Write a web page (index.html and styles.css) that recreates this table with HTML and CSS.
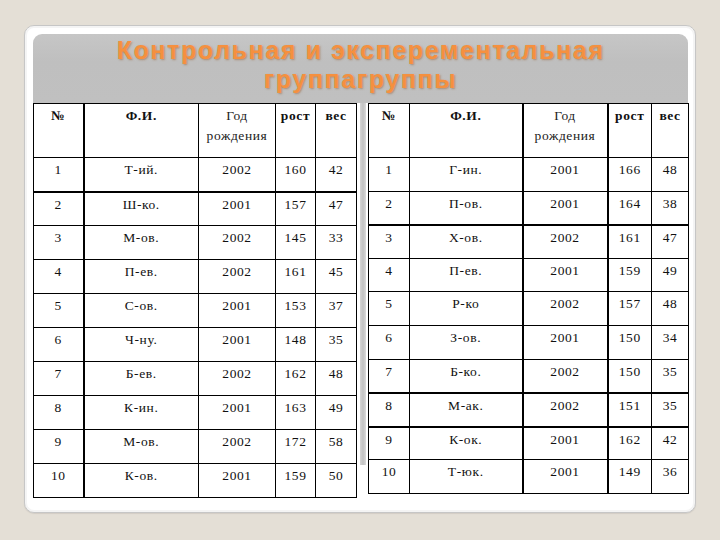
FILE: index.html
```html
<!DOCTYPE html>
<html lang="ru">
<head>
<meta charset="utf-8">
<title>Контрольная и эксперементальная группагруппы</title>
<link rel="stylesheet" href="styles.css">
</head>
<body>
<div class="card">
  <div class="banner">
    <h1 class="title">Контрольная и эксперементальная<br>группагруппы</h1>
  </div>
  <div class="tables">
    <table class="grid grid-left">
      <colgroup><col class="c1"><col class="c2"><col class="c3"><col class="c4"><col class="c5"></colgroup>
      <tr class="head"><th class="thickr">№</th><th>Ф.И.</th><th class="thin">Год<br>рождения</th><th>рост</th><th>вес</th></tr>
      <tr><td class="thickr">1</td><td>Т-ий.</td><td>2002</td><td>160</td><td>42</td></tr>
      <tr class="thickt"><td class="thickr">2</td><td>Ш-ко.</td><td>2001</td><td>157</td><td>47</td></tr>
      <tr><td class="thickr">3</td><td>М-ов.</td><td>2002</td><td>145</td><td>33</td></tr>
      <tr><td class="thickr">4</td><td>П-ев.</td><td>2002</td><td>161</td><td>45</td></tr>
      <tr><td class="thickr">5</td><td>С-ов.</td><td>2001</td><td>153</td><td>37</td></tr>
      <tr><td class="thickr">6</td><td>Ч-ну.</td><td>2001</td><td>148</td><td>35</td></tr>
      <tr><td class="thickr">7</td><td>Б-ев.</td><td>2002</td><td>162</td><td>48</td></tr>
      <tr><td class="thickr">8</td><td>К-ин.</td><td>2001</td><td>163</td><td>49</td></tr>
      <tr><td class="thickr">9</td><td>М-ов.</td><td>2002</td><td>172</td><td>58</td></tr>
      <tr><td class="thickr">10</td><td>К-ов.</td><td>2001</td><td>159</td><td>50</td></tr>
    </table>
    <div class="divider"><div class="divider-bar"></div></div>
    <table class="grid grid-right">
      <colgroup><col class="r1"><col class="r2"><col class="r3"><col class="r4"><col class="r5"></colgroup>
      <tr class="head"><th>№</th><th class="thickr">Ф.И.</th><th class="thickr thin">Год<br>рождения</th><th>рост</th><th>вес</th></tr>
      <tr><td>1</td><td class="thickr">Г-ин.</td><td class="thickr">2001</td><td>166</td><td>48</td></tr>
      <tr><td>2</td><td class="thickr">П-ов.</td><td class="thickr">2001</td><td>164</td><td>38</td></tr>
      <tr class="thickt"><td>3</td><td class="thickr">Х-ов.</td><td class="thickr">2002</td><td>161</td><td>47</td></tr>
      <tr><td>4</td><td class="thickr">П-ев.</td><td class="thickr">2001</td><td>159</td><td>49</td></tr>
      <tr><td>5</td><td class="thickr">Р-ко</td><td class="thickr">2002</td><td>157</td><td>48</td></tr>
      <tr><td>6</td><td class="thickr">З-ов.</td><td class="thickr">2001</td><td>150</td><td>34</td></tr>
      <tr><td>7</td><td class="thickr">Б-ко.</td><td class="thickr">2002</td><td>150</td><td>35</td></tr>
      <tr class="thickt"><td>8</td><td class="thickr">М-ак.</td><td class="thickr">2002</td><td>151</td><td>35</td></tr>
      <tr class="thickt"><td>9</td><td class="thickr">К-ок.</td><td class="thickr">2001</td><td>162</td><td>42</td></tr>
      <tr><td>10</td><td class="thickr">Т-юк.</td><td class="thickr">2001</td><td>149</td><td>36</td></tr>
    </table>
  </div>
</div>
</body>
</html>
```

FILE: styles.css
```css
html, body {
  margin: 0;
  padding: 0;
}
body {
  background: #e4dfd6;
  width: 720px;
  height: 540px;
  overflow: hidden;
  padding-top: 25px;
  box-sizing: border-box;
}
.card {
  margin: 0 24px 0 24px;
  height: 488px;
  box-sizing: border-box;
  background: #ffffff;
  border: 1px solid #c6c6c6;
  border-radius: 10px;
  box-shadow: inset 0 0 0 2px #f4f4f4, 0 1px 1px #d2cdc5;
  padding: 8px 7px 0 8px;
}
.banner {
  height: 69px;
  background: linear-gradient(#c6c6c6, #bfbfbf 40%, #c0c0c0);
  border-radius: 9px 9px 0 0;
  display: flex;
  justify-content: center;
  align-items: flex-start;
}
.title {
  margin: 2px 0 0 0;
  font-family: "Liberation Sans", Arial, sans-serif;
  font-weight: bold;
  font-size: 25px;
  line-height: 29px;
  letter-spacing: 1.6px;
  text-align: center;
  color: #f5903f;
  text-shadow: 1px 1px 2px rgba(150, 90, 40, 0.5);
}
.tables {
  display: flex;
  align-items: flex-start;
}
.grid {
  border-collapse: collapse;
  table-layout: fixed;
  font-family: "Liberation Serif", "Times New Roman", serif;
  font-size: 13.5px;
  letter-spacing: 0.6px;
  color: #111;
  background: #ffffff;
}
.grid-left { width: 323px; }
.grid-right { width: 320px; }
.c1 { width: 50px; }
.c2 { width: 115px; }
.c3 { width: 77px; }
.c4 { width: 40px; }
.c5 { width: 41px; }
.r1 { width: 41px; }
.r2 { width: 113px; }
.r3 { width: 85px; }
.r4 { width: 44px; }
.r5 { width: 37px; }
.grid th, .grid td {
  border: 1px solid #000;
  text-align: center;
  vertical-align: top;
  padding: 3px 1px 0 1px;
  height: 30px;
  line-height: 17px;
  white-space: nowrap;
}
.grid-right td {
  height: 29.6px;
}
.grid th {
  font-weight: bold;
  height: 51px;
  padding-top: 2px;
  line-height: 20px;
}
.grid th.thin {
  font-weight: normal;
  color: #222;
}
.grid .thickr {
  border-right: 2px solid #000;
}
.grid tr.thickt td {
  border-top: 2px solid #000;
  height: 29px;
}
.grid-right tr.thickt td {
  height: 28.6px;
}
.divider {
  width: 11px;
  flex: none;
  display: flex;
  justify-content: center;
}
.divider-bar {
  width: 6px;
  height: 362px;
  background: linear-gradient(to right, #d6d6d6, #c2c2c2 50%, #d9d9d9);
}
```
